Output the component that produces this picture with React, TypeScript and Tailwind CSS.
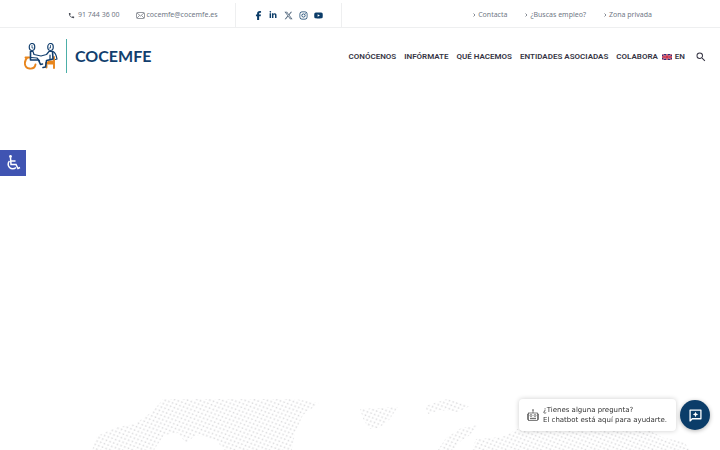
import { useState } from 'react';
import { FaFacebookF, FaLinkedinIn, FaYoutube, FaInstagram, FaXTwitter } from 'react-icons/fa6';
import { MdPhone, MdSearch } from 'react-icons/md';

const topLinks = ['Contacta', '¿Buscas empleo?', 'Zona privada'];

const navLinks = ['CONÓCENOS', 'INFÓRMATE', 'QUÉ HACEMOS', 'ENTIDADES ASOCIADAS', 'COLABORA'];

const socials = [
  { name: 'Facebook', icon: <FaFacebookF className="size-[9px]" /> },
  { name: 'LinkedIn', icon: <FaLinkedinIn className="size-2" /> },
  { name: 'X', icon: <FaXTwitter className="size-[9px] text-[#52677d]" /> },
  { name: 'Instagram', icon: <FaInstagram className="size-[9px]" /> },
  { name: 'YouTube', icon: <FaYoutube className="size-[9px]" /> },
];

function TopBar() {
  return (
    <div className="flex h-7 items-center border-b border-[#eeeff0] px-[68px] pt-[3px] font-['Noto_Sans','Open_Sans',sans-serif] text-[7px] text-[#707885]">
      <a href="tel:917443600" className="flex items-center gap-[3px] whitespace-nowrap">
        <MdPhone className="size-[7px] text-[#4a4e58]" />
        91 744 36 00
      </a>
      <a href="mailto:cocemfe@cocemfe.es" className="ml-4 flex items-center gap-[2px] whitespace-nowrap">
        <svg className="h-[7px] w-[9px]" viewBox="0 0 18 14" fill="none" stroke="#5f636c" strokeWidth="1.3">
          <rect x="1" y="1" width="16" height="12" rx="2" />
          <path d="M2 2l7 6 7-6M2 12l5-5M16 12l-5-5" />
        </svg>
        cocemfe@cocemfe.es
      </a>
      <div className="ml-[17px] flex h-6 items-center gap-[6px] border-x border-[#eeeff0] px-[18px] text-[#0b3c68]">
        {socials.map((social) => (
          <a key={social.name} href="#" aria-label={social.name} className="flex w-[9px] justify-center">
            {social.icon}
          </a>
        ))}
      </div>
      <nav className="ml-auto flex gap-[18px]">
        {topLinks.map((link) => (
          <a key={link} href="#" className="flex items-center gap-[2px] whitespace-nowrap">
            <svg className="h-1 w-[3px]" viewBox="0 0 6 8" fill="none" stroke="#5f6672" strokeWidth="1.5">
              <path d="M1 1l3 3-3 3" />
            </svg>
            {link}
          </a>
        ))}
      </nav>
    </div>
  );
}

function Logo() {
  return (
    <a href="#" aria-label="COCEMFE" className="flex items-center">
      <svg className="h-[27px] w-[34px]" viewBox="0 0 68 54" fill="none" strokeLinecap="round" strokeLinejoin="round">
        {/* wheelchair and chair */}
        <g stroke="#e8851c" strokeWidth="3.8">
          <path d="M7 29C-1 36 0 50 11 51c7 1 11-3 12-8M3 29h8" />
          <path d="M44 40h15M60 28v22M45 41v8" />
        </g>
        <path d="M47 35h12v8H47z" fill="#e8851c" />
        <g stroke="#123f6e" strokeWidth="2.4">
          <ellipse cx="16" cy="8" rx="5.500" ry="7" />
          <ellipse cx="53" cy="8" rx="5.500" ry="7" />
          <path d="M16 5v5h2M53 5v5h-2" strokeWidth="1.6" />
          {/* left figure */}
          <path d="M13 17v17h16l4 9 4-1" strokeWidth="3.2" />
          <path d="M13 17h5l2 6 14 3 11-3 5-6h7" />
          <path d="M14 29l12 1 5 6" />
          {/* right figure */}
          <path d="M57 17l1 15-13 3-2 13-5 1" strokeWidth="3.2" />
          <path d="M58 17c6 3 7 9 8 15l-3 1M52 24v8" />
        </g>
      </svg>
      <span className="ml-2 h-[34px] w-px bg-[#4cafa8]" />
      <span className="ml-2 pb-px font-['Lato',sans-serif] text-[16px] leading-none font-bold text-[#123f6e]">COCEMFE</span>
    </a>
  );
}

function UkFlag() {
  return (
    <svg className="h-[6px] w-[10px]" viewBox="0 0 20 12">
      <path fill="#29337a" d="M0 0h20v12H0z" />
      <path stroke="#fff" strokeWidth="2" d="M0 0l20 12M20 0L0 12" />
      <path stroke="#d22d48" strokeWidth="1.4" d="M0 0l20 12M20 0L0 12" />
      <path stroke="#fff" strokeWidth="3.400" d="M10 0v12M0 6h20" />
      <path stroke="#c8203c" strokeWidth="2.600" d="M10 0v12M0 6h20" />
    </svg>
  );
}

function Header() {
  return (
    <header className="flex h-14 items-center justify-between pr-[13px] pl-6">
      <Logo />
      <nav className="flex items-center gap-2 pt-px font-['Roboto',sans-serif] text-[8px] font-semibold whitespace-nowrap text-[#363544]">
        {navLinks.map((link) => (
          <a key={link} href="#">
            {link}
          </a>
        ))}
        <a href="#" className="-ml-1 flex items-center gap-[3px]">
          <UkFlag />
          EN
        </a>
        <button type="button" aria-label="Buscar" className="ml-[2px]">
          <MdSearch className="size-3" />
        </button>
      </nav>
    </header>
  );
}

function WorldMap() {
  return (
    <svg className="h-[52px] w-full" viewBox="0 0 720 52" preserveAspectRatio="xMidYMax slice">
      <defs>
        <pattern id="dots" width="6" height="5" patternUnits="userSpaceOnUse" patternTransform="rotate(-20)">
          <circle cx="1.500" cy="1.200" r="0.9" fill="#dcdcde" />
          <circle cx="4.500" cy="3.700" r="0.9" fill="#dcdcde" />
        </pattern>
      </defs>
      <g fill="url(#dots)">
        <path d="M92 52l5-14 20-9 18-3 18-13 10-12h132l24 4-16 12-8 18-3 17h-68l-8-10-20-5-10 8-8-10-14 2-10 15z" />
        <path d="M360 11l38-2-9 13-10 8-9 1-6-8z" />
        <path d="M425 8l22-7 23 7-12 6-18-2-12 4z" />
        <path d="M438 52l8-12 15-10 17-3-8 10-12 8-4 7z" />
        <path d="M472 52l4-11 26-2 22-11 60 4 60-2 20 10 20 4 6 8z" />
      </g>
    </svg>
  );
}

function Chatbot({ onOpen }: { onOpen: () => void }) {
  return (
    <div className="fixed right-[10px] bottom-[19px] flex items-center gap-1">
      <div className="flex h-8 items-center gap-1 rounded-[4px] bg-white pr-[9px] pl-2 shadow-[0_0_5px_rgba(0,0,0,0.2)]">
        <svg className="h-3 w-3" viewBox="0 0 24 24" fill="none" stroke="#555" strokeWidth="1.5">
          <rect x="3" y="8" width="18" height="15" />
          <path d="M12 8V1M10 2h4M3 10H1v11h2M21 10h2v11h-2M6 19h12M8 17v4M12 17v4M16 17v4" />
          <circle cx="8" cy="13" r="2" />
          <circle cx="16" cy="13" r="2" />
        </svg>
        <p className="font-['DejaVu_Sans',sans-serif] text-[7px] leading-[10px] whitespace-nowrap text-[#333]">
          ¿Tienes alguna pregunta?
          <br />
          El chatbot está aquí para ayudarte.
        </p>
      </div>
      <button
        type="button"
        aria-label="Abrir chat"
        onClick={onOpen}
        className="flex size-[30px] items-center justify-center rounded-full bg-[#0b3d69] shadow-[0_1px_4px_rgba(0,0,0,0.3)]"
      >
        <svg className="size-[13px]" viewBox="0 0 24 24" fill="none" stroke="#fff" strokeWidth="2.400">
          <path d="M2 22V2h20v16H6z" strokeLinejoin="round" />
          <path d="M12 5l1.500 3.500L17 10l-3.500 1.500L12 15l-1.500-3.500L7 10l3.500-1.500z" fill="#fff" stroke="none" />
        </svg>
      </button>
    </div>
  );
}

export default function App() {
  const [chatOpen, setChatOpen] = useState(false);

  return (
    <div className="flex min-h-screen flex-col bg-white">
      <TopBar />
      <Header />
      <button
        type="button"
        aria-label="Abrir barra de herramientas de accesibilidad"
        className="fixed top-[150px] left-0 flex size-[26px] items-center justify-center bg-[#4054b2]"
      >
        <svg className="size-4" viewBox="0 0 32 32" fill="none" stroke="#fff" strokeWidth="3">
          <circle cx="11" cy="3" r="2.800" fill="#fff" stroke="none" />
          <path d="M11 5l1 14h10l4 8 4-2M12 12h9" />
          <path d="M9 12a9 9 0 1 0 13 13" />
        </svg>
      </button>
      <main className="mt-auto flex">
        <WorldMap />
      </main>
      {!chatOpen && <Chatbot onOpen={() => setChatOpen(true)} />}
    </div>
  );
}
